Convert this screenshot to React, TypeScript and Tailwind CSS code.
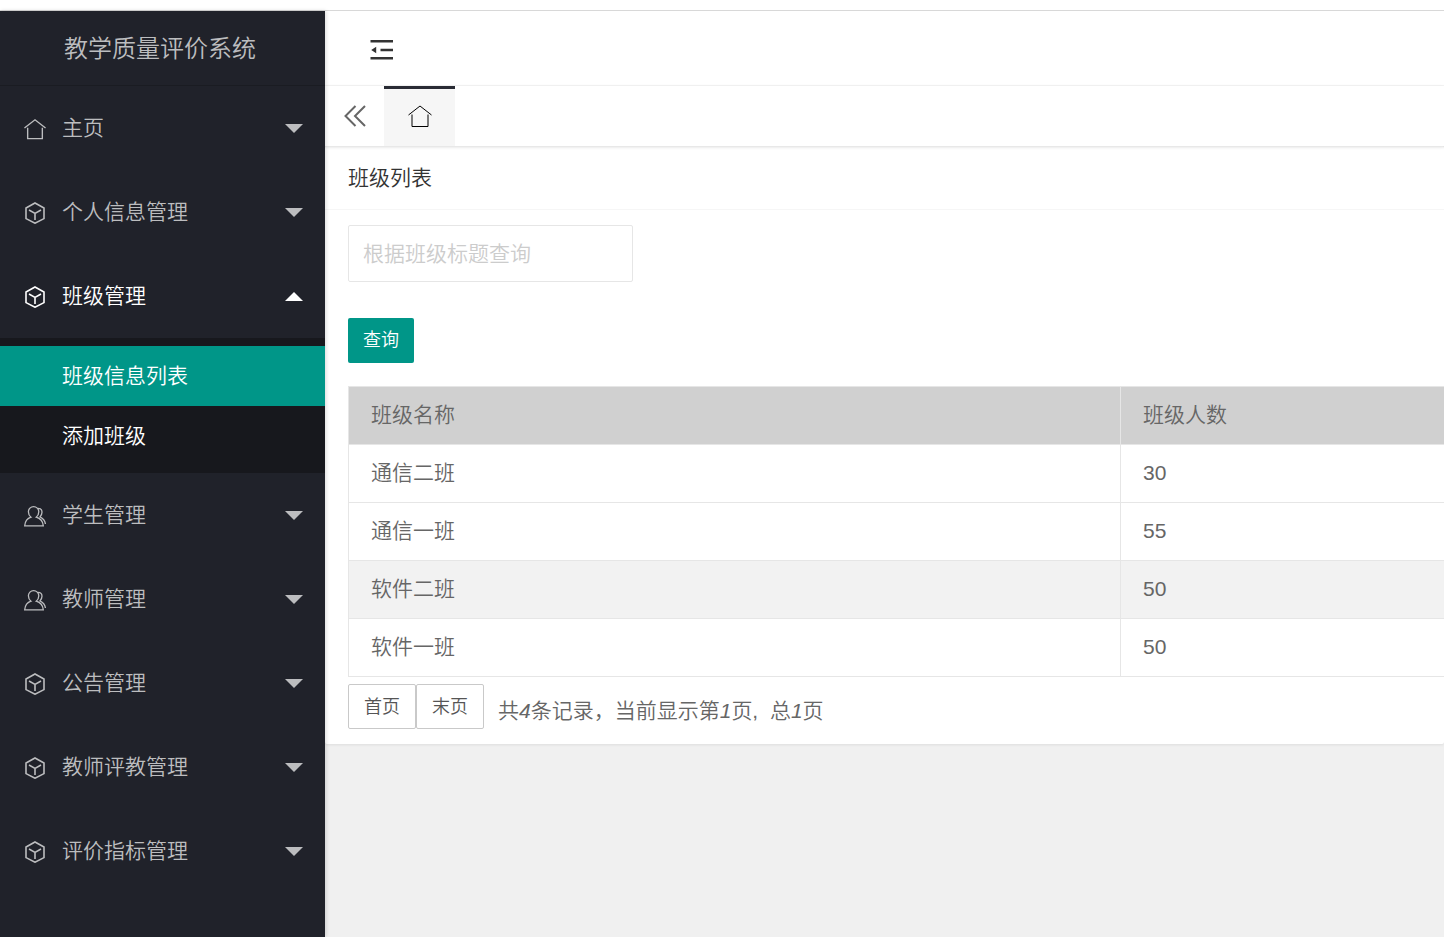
import { useState } from 'react';
import clsx from 'clsx';

type IconName = 'home' | 'cube' | 'users';

interface MenuItem {
  title: string;
  icon: IconName;
  children?: string[];
}

const menu: MenuItem[] = [
  { title: '主页', icon: 'home' },
  { title: '个人信息管理', icon: 'cube' },
  { title: '班级管理', icon: 'cube', children: ['班级信息列表', '添加班级'] },
  { title: '学生管理', icon: 'users' },
  { title: '教师管理', icon: 'users' },
  { title: '公告管理', icon: 'cube' },
  { title: '教师评教管理', icon: 'cube' },
  { title: '评价指标管理', icon: 'cube' },
];

const classes = [
  { name: '通信二班', count: 30 },
  { name: '通信一班', count: 55 },
  { name: '软件二班', count: 50 },
  { name: '软件一班', count: 50 },
];

function HomeIcon({ className }: { className?: string }) {
  return (
    <svg viewBox="0 0 24 24" className={className} fill="none" stroke="currentColor">
      <path d="M0.500 11 12 2l11.500 9" />
      <path d="M4 10.500v12h16v-12" />
    </svg>
  );
}

function MenuIcon({ name }: { name: IconName }) {
  if (name === 'home') return <HomeIcon className="size-[22px] stroke-[1.500]" />;
  if (name === 'users') {
    return (
      <svg viewBox="0 0 22 22" className="size-[22px]" fill="none" stroke="currentColor" strokeWidth="1.300">
        <path d="M7 12.200C5.200 10.800 4.400 8.800 4.400 6.800a5.200 5.200 0 0 1 10.400 0c0 2-.8 4-2.600 5.400 4 1.200 6.700 4 7.100 8.600H0.700c.4-4.600 2.500-7.400 6.300-8.600z" />
        <path d="M14 3.400c2.700 0 4 1.700 4 3.900 0 1.700-.7 3.200-2 4.600 3 1.500 5 3.800 5.400 7.100" />
      </svg>
    );
  }
  return (
    <svg viewBox="0 0 22 22" className="size-[22px]" fill="none" stroke="currentColor" strokeWidth="1.600">
      <path d="M11 1 20 6v10.600L11 21.200 2 16.600V6z" />
      <path d="M5 8 11 11.400 17 8M11 11.400v6.600" />
    </svg>
  );
}

function Sidebar() {
  const [open, setOpen] = useState('班级管理');

  return (
    <aside className="relative z-10 w-[325px] shrink-0 bg-[#20222a] text-[#bcbdbf] shadow-[1px_0_4px_rgba(0,0,0,0.15)]">
      <h1 className="flex h-[75px] items-center justify-center border-b border-[#1a1c22] pt-[2px] pr-[5px] text-2xl font-[350]">
        教学质量评价系统
      </h1>
      <nav>
        {menu.map((item) => {
          const isOpen = open === item.title;
          return (
            <div key={item.title}>
              <button
                type="button"
                onClick={() => setOpen(isOpen ? '' : item.title)}
                className={clsx('flex h-[84px] w-full items-center pr-[22px] pl-6', isOpen && 'text-white')}
              >
                <span className="pt-[2px]">
                  <MenuIcon name={item.icon} />
                </span>
                <span className="ml-4">{item.title}</span>
                <svg
                  viewBox="0 0 18 9"
                  className={clsx('ml-auto h-[9px] w-[18px]', isOpen && 'rotate-180')}
                  fill="currentColor"
                >
                  <path d="M0 0h18L9 9z" />
                </svg>
              </button>
              {isOpen && item.children && (
                <div className="bg-[#17181d] pt-2 pb-[7px] text-white">
                  {item.children.map((child, i) => (
                    <a
                      key={child}
                      href="#"
                      className={clsx('flex h-[60px] items-center pl-[62px]', i === 0 && 'bg-[#009688]')}
                    >
                      {child}
                    </a>
                  ))}
                </div>
              )}
            </div>
          );
        })}
      </nav>
    </aside>
  );
}

function Header() {
  return (
    <>
      <header className="flex h-[75px] items-center border-b border-[#f6f6f6] bg-white pt-[3px] pl-[45px]">
        <button type="button" aria-label="侧边伸缩" className="text-[#333]">
          <svg viewBox="0 0 24 22" className="h-[22px] w-6" fill="currentColor">
            <path d="M0.500 1h22.500v2.500H.5zM10.500 9.700h12.500v2.500h-12.500zM.5 18h22.500v2.500H.5zM1.200 11l5-3.200v6.400z" />
          </svg>
        </button>
      </header>
      <div className="relative flex h-[60px] bg-white shadow-[0_1px_3px_rgba(0,0,0,0.15)]">
        <button type="button" aria-label="向左" className="flex w-[59px] items-center justify-center text-[#666]">
          <svg viewBox="0 0 22 22" className="size-[22px]" fill="none" stroke="currentColor" strokeWidth="2">
            <path d="M11.500 1 1.500 11l10 10M21 1 11 11l10 10" />
          </svg>
        </button>
        <a
          href="#"
          aria-label="首页"
          className="flex w-[71px] items-center justify-center border-t-3 border-[#292b34] bg-[#f6f6f6] pb-1 text-black"
        >
          <HomeIcon className="size-6 stroke-1" />
        </a>
      </div>
    </>
  );
}

function ClassTable() {
  return (
    <table className="mt-[23px] w-full table-fixed border-collapse border-l border-[#e6e6e6] text-left">
      <thead>
        <tr className="h-[58px] border-y border-[#e6e6e6] bg-[#d0d0d0]">
          <th className="w-[772px] border-r border-[#e6e6e6] px-[22px] pb-[2px] font-[350]">班级名称</th>
          <th className="px-[22px] pb-[2px] font-[350]">班级人数</th>
        </tr>
      </thead>
      <tbody>
        {classes.map((row, i) => (
          <tr
            key={row.name}
            className={clsx('h-[58px] border-b border-[#e6e6e6]', i === 2 && 'bg-[#f2f2f2]')}
          >
            <td className="border-r border-[#e6e6e6] px-[22px] pb-[2px]">{row.name}</td>
            <td className="px-[22px] pb-[2px]">{row.count}</td>
          </tr>
        ))}
      </tbody>
    </table>
  );
}

export default function App() {
  return (
    <div className="flex min-h-screen flex-col bg-white font-['Liberation_Sans','Noto_Sans_CJK_SC',sans-serif] text-[21px] leading-8 font-[350] text-[#666]">
      <div className="h-[11px] border-b border-[#d8d8d8]" />
      <div className="flex flex-1">
        <Sidebar />
        <main className="min-w-0 flex-1 overflow-hidden bg-[#f0f0f0]">
          <Header />
          <section className="rounded-xs bg-white shadow-[0_1px_3px_rgba(0,0,0,0.08)]">
            <h2 className="flex h-16 items-center border-b border-[#f6f6f6] pl-[23px] font-[350] text-[#333]">
              班级列表
            </h2>
            <div className="pt-[15px] pb-[15px] pl-[23px]">
              <form onSubmit={(e) => e.preventDefault()}>
                <input
                  type="text"
                  aria-label="根据班级标题查询"
                  placeholder="根据班级标题查询"
                  className="block h-[57px] w-[285px] rounded-xs border border-[#e6e6e6] px-[14px] outline-none placeholder:text-[#ccc]"
                />
                <button
                  type="submit"
                  className="mt-9 block h-[45px] w-[66px] rounded-xs bg-[#009688] pb-[2px] text-lg text-white"
                >
                  查询
                </button>
              </form>
              <ClassTable />
              <div className="mt-[7px] flex items-center">
                <button type="button" className="h-[45px] w-[68px] rounded-xs border border-[#c9c9c9] text-lg text-[#555]">
                  首页
                </button>
                <button type="button" className="h-[45px] w-[68px] rounded-xs border border-[#c9c9c9] text-lg text-[#555]">
                  末页
                </button>
                <p className="ml-[14px] pt-2">
                  共<i>4</i>条记录，当前显示第<i>1</i>页, &nbsp;总<i>1</i>页
                </p>
              </div>
            </div>
          </section>
        </main>
      </div>
    </div>
  );
}
